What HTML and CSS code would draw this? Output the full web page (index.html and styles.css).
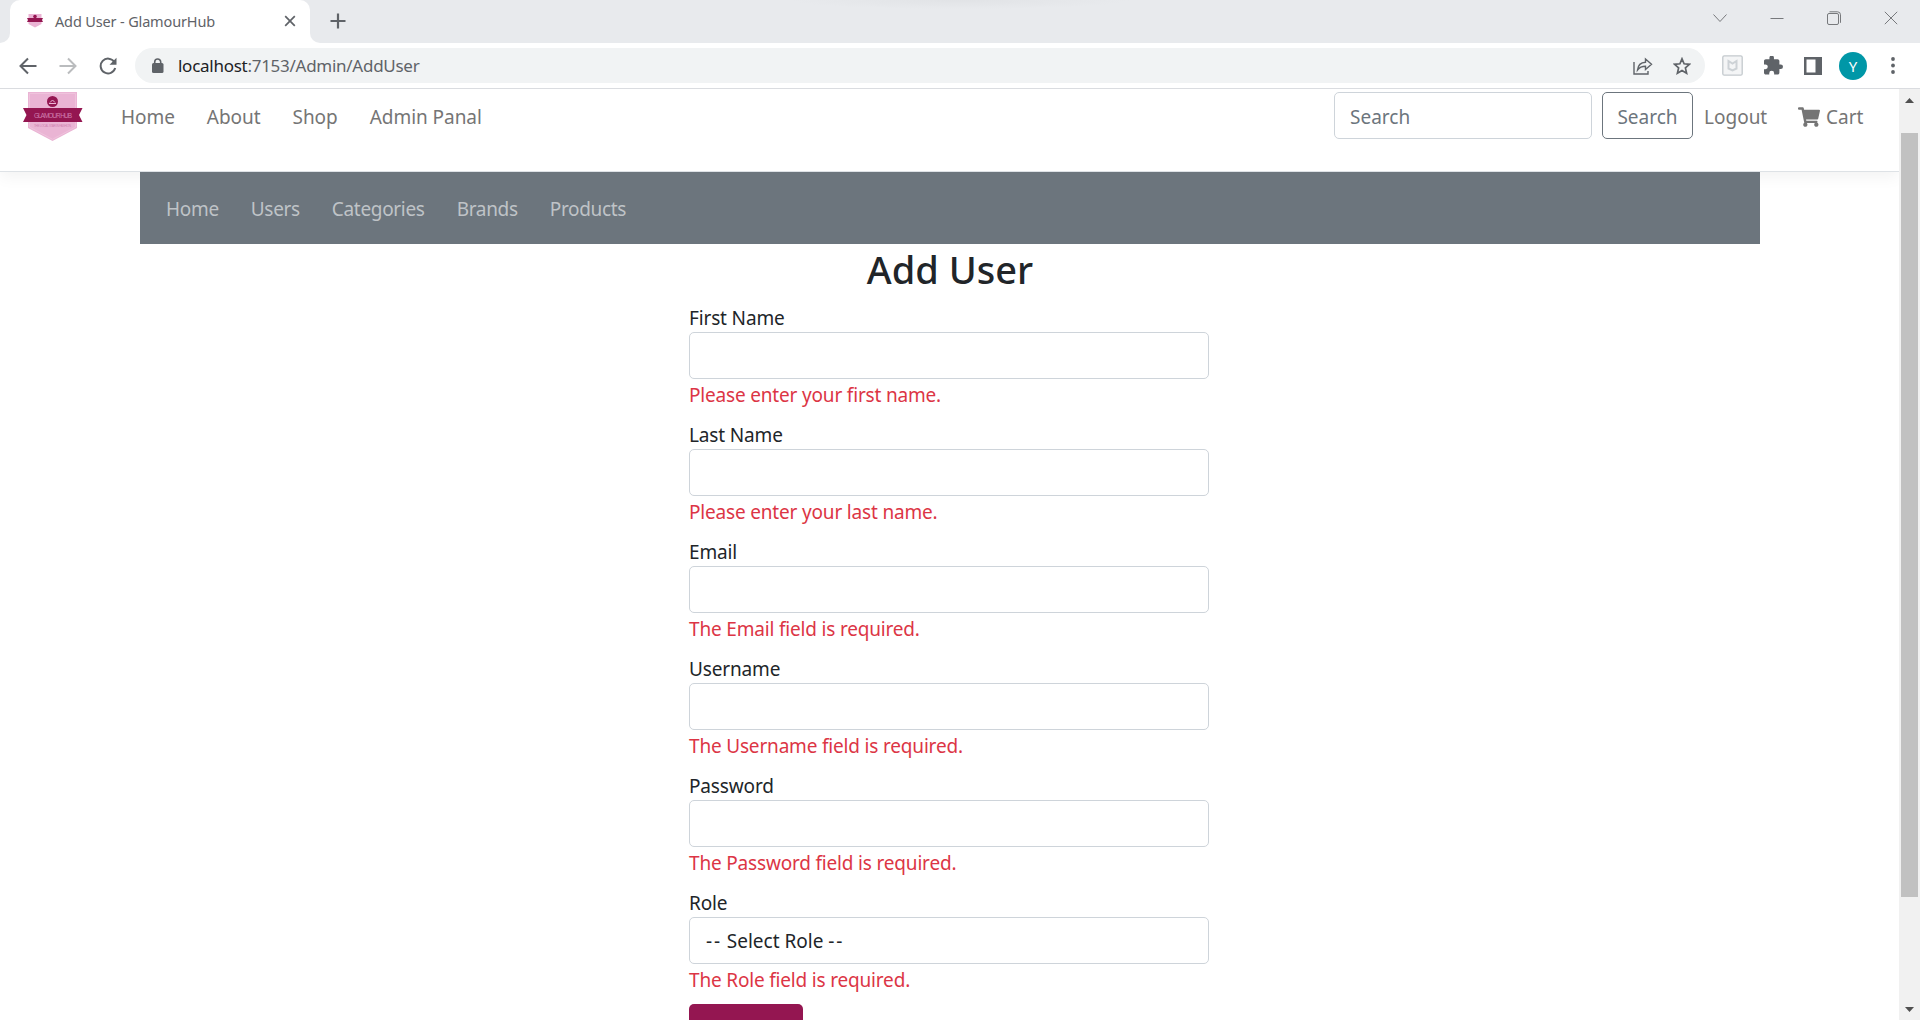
FILE: index.html
```html
<!DOCTYPE html>
<html lang="en">
<head>
<meta charset="utf-8">
<title>Add User - GlamourHub</title>
<link rel="stylesheet" href="styles.css">
</head>
<body>
<div class="tabstrip">
  <div class="strip-lead"></div>
  <div class="tab">
    <svg class="favicon" width="16" height="14" viewBox="0 0 16 14"><path fill="#eab4d4" d="M1.500 0h13v10L8 13.500 1.500 10z"/><circle cx="8" cy="2.500" r="1.800" fill="#941651"/><path fill="#941651" d="M0 4h16l-1 2 1 2H0l1-2z"/></svg>
    <span class="tab-title">Add User - GlamourHub</span>
    <svg class="tab-close" width="12" height="12" viewBox="0 0 12 12"><path d="M1.200 1.200l9.600 9.600M10.800 1.200l-9.600 9.600" stroke="#5f6368" stroke-width="1.700"/></svg>
  </div>
  <div class="strip-rest">
    <svg width="16" height="16" viewBox="0 0 16 16"><path d="M8 .5v15M.5 8h15" stroke="#5f6368" stroke-width="2.200"/></svg>
  </div>
  <div class="window-buttons">
    <svg width="14" height="14" viewBox="0 0 14 14"><path d="M.5 3.500L7 10.500l6.500-7"/></svg>
    <svg width="14" height="14" viewBox="0 0 14 14"><path d="M.5 7.500h13"/></svg>
    <svg width="14" height="14" viewBox="0 0 14 14"><rect x=".5" y="2.500" width="11" height="11" rx="1.500"/><path d="M2.500.8h8a3 3 0 0 1 3 3v8"/></svg>
    <svg width="14" height="14" viewBox="0 0 14 14"><path d="M.8.8l12.400 12.400M13.200.8L.8 13.200"/></svg>
  </div>
</div>
<div class="toolbar">
  <div class="nav-buttons">
    <svg width="18" height="18" viewBox="0 0 18 18" stroke="#5f6368"><path d="M17.500 9H2M9 1.500L1.500 9 9 16.500"/></svg>
    <svg width="18" height="18" viewBox="0 0 18 18" stroke="#babcbe"><path d="M.5 9H16M9 1.500L16.500 9 9 16.500"/></svg>
    <svg width="18" height="18" viewBox="0 0 18 18" stroke="#5f6368"><path d="M15.300 5A7.400 7.400 0 1 0 16.200 11"/><path d="M17.500.8v7h-7z" fill="#5f6368" stroke="none"/></svg>
  </div>
  <div class="address">
    <svg width="12" height="16" viewBox="0 0 12 16"><rect y="5" width="11.500" height="10" rx="1.500" fill="#5f6368"/><path d="M2.700 6V4a3 3 0 0 1 6 0v2" fill="none" stroke="#5f6368" stroke-width="1.600"/></svg>
    <span class="url"><b>localhost</b>:7153/Admin/AddUser</span>
    <svg class="share" width="20" height="18" viewBox="0 0 20 18"><path d="M1 5v12h14v-3M4.500 13c.5-5 3-7.500 8-7.800V2l6 5.300-6 5.200V9.300c-3.500 0-6 1-8 3.700z" fill="none" stroke="#5f6368" stroke-width="1.400"/></svg>
    <svg class="star" width="18" height="18" viewBox="0 0 18 18"><path d="M9 1.800l2.100 5 5.400.5-4.100 3.600 1.200 5.300L9 13.400l-4.600 2.800 1.200-5.300L1.500 7.300l5.400-.5z" fill="none" stroke="#5f6368" stroke-width="1.700"/></svg>
  </div>
  <div class="extensions">
    <svg width="21" height="21" viewBox="0 0 21 21"><rect x=".8" y=".8" width="19.400" height="19.400" rx="1.500" fill="#f4f5f6" stroke="#c3c9cd" stroke-width="1.300"/><path d="M6.500 6v7.500l4 1.800 4-1.800V6l-4 2.500z" fill="none" stroke="#cdd2d6" stroke-width="2"/></svg>
    <svg class="puzzle" width="19" height="19" viewBox="2 1.500 21 21"><path fill="#5f6368" d="M20.500 11H19V7c0-1.100-.9-2-2-2h-4V3.500a2.500 2.500 0 0 0-5 0V5H4c-1.100 0-2 .9-2 2v3.800h1.500a2.700 2.700 0 0 1 0 5.400H2V20c0 1.100.9 2 2 2h3.800v-1.500a2.700 2.700 0 0 1 5.400 0V22H17c1.100 0 2-.9 2-2v-4h1.500a2.500 2.500 0 0 0 0-5z"/></svg>
    <svg width="18" height="18" viewBox="0 0 18 18"><path fill="#5f6368" fill-rule="evenodd" d="M0 0h18v18H0zM2.500 2.500v13h9v-13z"/></svg>
    <span class="avatar">Y</span>
    <svg width="4" height="17" viewBox="0 0 4 17" fill="#5f6368"><circle cx="2" cy="2" r="1.900"/><circle cx="2" cy="8.500" r="1.900"/><circle cx="2" cy="15" r="1.900"/></svg>
  </div>
</div>
<div class="viewport">
  <div class="page">
    <header class="site-header">
      <svg class="logo" width="60" height="50" viewBox="0 0 60 50"><path fill="#eab4d4" d="M5 0h49v36L29.500 49 5 36z"/><path d="M6.500 1.500h46v33.600L29.500 47.300 6.500 35z" fill="none" stroke="#f0c8e0" stroke-width=".7"/><circle cx="29.500" cy="9.500" r="5.500" fill="#941651"/><path d="M26 11.500h7M27 10.500l2.500-2.500 2.500 2.500" stroke="#eab4d4" fill="none"/><path fill="#941651" d="M0 16h59.500L56 23l3.500 7H0l3.500-7z"/><text x="11" y="25.700" textLength="38" class="logo-name">GLAMOUR HUB</text><text x="11" y="35" textLength="37" class="logo-tag">THE LOCAL STAR IN FASHION</text></svg>
      <nav class="main-nav"><a>Home</a><a>About</a><a>Shop</a><a>Admin Panal</a></nav>
      <div class="search-box">Search</div>
      <div class="search-button">Search</div>
      <a class="logout">Logout</a>
      <a class="cart"><svg width="22" height="20" viewBox="0 0 576 512"><path fill="#757575" d="M528.100 301.300l47.300-208C578.800 78.300 567.400 64 552 64H159.200l-9.200-44.800C147.800 8 137.900 0 126.500 0H24C10.700 0 0 10.700 0 24v16c0 13.300 10.700 24 24 24h69.900l70.200 343.400C147.300 417.100 136 435.200 136 456c0 30.900 25.100 56 56 56s56-25.100 56-56c0-15.700-6.400-29.800-16.800-40h209.600C430.400 426.200 424 440.300 424 456c0 30.900 25.100 56 56 56s56-25.100 56-56c0-22.200-12.900-41.300-31.600-50.400l5.500-24.300c3.400-15-8-29.300-23.400-29.300H218.100l-6.500-32h293.100c11.200 0 20.900-7.800 23.400-18.700z"/></svg><span>Cart</span></a>
    </header>
    <main class="container">
      <nav class="admin-nav"><a>Home</a><a>Users</a><a>Categories</a><a>Brands</a><a>Products</a></nav>
      <h1>Add User</h1>
      <form class="user-form">
        <div class="field"><label>First Name</label><div class="control"></div><span class="error">Please enter your first name.</span></div>
        <div class="field"><label>Last Name</label><div class="control"></div><span class="error">Please enter your last name.</span></div>
        <div class="field"><label>Email</label><div class="control"></div><span class="error">The Email field is required.</span></div>
        <div class="field"><label>Username</label><div class="control"></div><span class="error">The Username field is required.</span></div>
        <div class="field"><label>Password</label><div class="control"></div><span class="error">The Password field is required.</span></div>
        <div class="field"><label>Role</label><div class="control"><span class="dashes">--</span> Select Role <span class="dashes">--</span></div><span class="error">The Role field is required.</span></div>
        <div class="submit"></div>
      </form>
    </main>
  </div>
  <div class="scrollbar">
    <svg width="9" height="5" viewBox="0 0 9 5"><path fill="#505050" d="M0 5L4.500 0 9 5z"/></svg>
    <div class="thumb"></div>
    <svg class="down" width="9" height="5" viewBox="0 0 9 5"><path fill="#505050" d="M0 0h9L4.500 5z"/></svg>
  </div>
</div>
</body>
</html>
```
FILE: styles.css
```css
* { box-sizing: border-box; }
body {
  margin: 0;
  width: 1920px;
  height: 1020px;
  overflow: hidden;
  display: flex;
  flex-direction: column;
  background: #fff;
  color: #212529;
  font: 400 19px/30px "Noto Sans", sans-serif;
}
svg { display: block; flex: none; }

.tabstrip { display: flex; height: 43px; flex: none; background: linear-gradient(#e8eaed 20px, #fff 20px); }
.strip-lead { width: 10px; background: #e8eaed; border-bottom-right-radius: 10px; }
.tab {
  width: 300px;
  display: flex;
  align-items: center;
  padding: 0 14px 2px 17px;
  background: #fff;
  border-radius: 10px 10px 0 0;
}
.tab-title { margin-left: 12px; font-size: 14.5px; letter-spacing: -.15px; color: #5f6368; white-space: nowrap; }
.tab-close { margin-left: auto; }
.strip-rest {
  flex: 1;
  padding: 13px 0 0 20px;
  background: radial-gradient(ellipse 170px 9px at 650px 0, #e1e3e6, #e8eaed) #e8eaed;
  border-bottom-left-radius: 10px;
}
.window-buttons { display: flex; gap: 43px; padding: 11px 22px 0 0; background: #e8eaed; }
.window-buttons svg { fill: none; stroke: #77797c; stroke-width: 1; }

.toolbar { display: flex; align-items: center; height: 46px; border-bottom: 1px solid #dadce0; flex: none; }
.nav-buttons { display: flex; gap: 22px; width: 135px; padding-left: 19px; }
.nav-buttons svg { fill: none; stroke-width: 2; }
.address { display: flex; align-items: center; width: 1570px; height: 35px; padding: 0 14px 0 17px; border-radius: 18px; background: #f1f3f4; }
.url { margin-left: 14px; font-size: 17px; letter-spacing: -.27px; color: #5f6368; white-space: nowrap; }
.url b { font-weight: inherit; color: #202124; }
.share { margin-left: auto; }
.star { margin-left: 20px; }
.extensions { display: flex; align-items: center; padding-left: 17px; }
.puzzle { margin: 0 21px; }
.avatar { width: 28px; height: 28px; margin: 0 24px 0 17px; border-radius: 50%; background: #0097a7; color: #fff; font-size: 15px; line-height: 28px; text-align: center; }

.viewport { display: flex; flex: 1; min-height: 0; }
.page { flex: 1; overflow: hidden; }
.site-header {
  display: flex;
  align-items: flex-start;
  height: 83px;
  padding: 3px 37px 0 23px;
  border-bottom: 1px solid #dee2e6;
  box-shadow: 0 5px 15px rgba(0, 0, 0, .05);
  color: #757575;
  line-height: 51px;
  white-space: nowrap;
}
.logo-name { font: 6.500px "Liberation Sans", sans-serif; fill: #cf7fae; }
.logo-tag { font: 3px "Liberation Sans", sans-serif; fill: #cf7fae; }
.main-nav { display: flex; gap: 32px; margin-left: 38px; letter-spacing: -.05px; }
.search-box, .search-button { height: 47px; line-height: 49px; border: 1px solid #ced4da; border-radius: 5px; color: #6c757d; }
.search-box { width: 258px; margin-left: auto; padding-left: 15px; }
.search-button { width: 91px; margin: 0 11px 0 10px; border-color: #6c757d; text-align: center; }
.logout { width: 94px; }
.cart { display: flex; width: 64px; gap: 6px; }
.cart svg { margin-top: 15px; }

.container { position: relative; width: 1620px; margin-left: 140px; }
.admin-nav { display: flex; gap: 32px; height: 72px; padding: 2px 0 0 26px; align-items: center; background: #6c757d; color: #bfc3c7; letter-spacing: -.32px; }
h1 { margin: 0 0 10px; padding-top: 2px; font-size: 38px; line-height: 46px; font-weight: 550; text-align: center; }
.user-form { width: 520px; margin-left: 549px; }
.field { display: flex; flex-direction: column; margin-bottom: 10px; white-space: nowrap; }
.field label { height: 30px; line-height: 32px; letter-spacing: -.15px; }
.control { height: 47px; padding-left: 16px; line-height: 47px; border: 1px solid #ced4da; border-radius: 5px; }
.dashes { letter-spacing: 1.8px; }
.error { height: 30px; line-height: 32px; letter-spacing: -.18px; color: #dc3545; }
.submit { width: 114px; height: 47px; background: #941651; border-radius: 5px; }

.scrollbar { display: flex; flex-direction: column; align-items: center; width: 21px; padding: 9px 0 8px; background: #f1f1f1; }
.thumb { width: 17px; height: 764px; margin-top: 30px; background: #c1c1c1; }
.down { margin-top: auto; }
```
